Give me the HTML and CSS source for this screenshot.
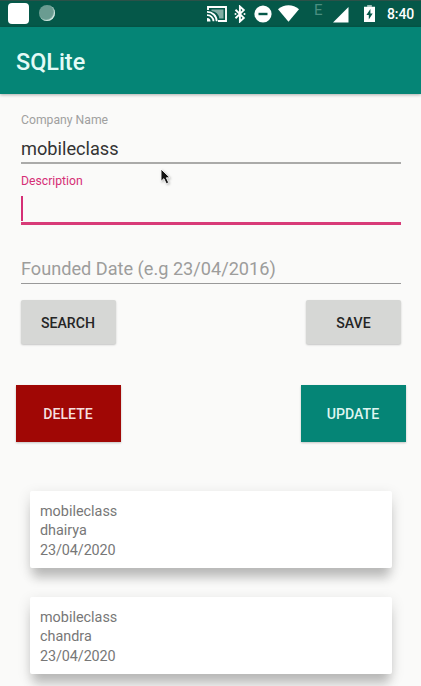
FILE: index.html
```html
<!DOCTYPE html>
<html lang="en">
<head>
<meta charset="utf-8">
<title>SQLite</title>
<link rel="stylesheet" href="styles.css">
</head>
<body>
<div class="screen">
  <div class="status">
    <span class="notice-square"></span>
    <span class="notice-dot"></span>
    <span class="spacer"></span>
    <svg class="cast" width="20" height="16" viewBox="0 0 20 16"><path d="M1 4V1h18v14h-8" fill="none" stroke="#fff" stroke-width="1.9"/><path d="M4.5 3.5h12v9h-4.2A9 9 0 0 0 4.5 5z" fill="#fff" opacity=".5"/><path d="M0 5.8A9.5 9.5 0 0 1 9.7 15.3M0 9.1A6.3 6.3 0 0 1 6.5 15.3" fill="none" stroke="#fff" stroke-width="1.8"/><path d="M0 12a3.4 3.4 0 0 1 3.5 3.5H0z" fill="#fff"/></svg>
    <svg class="bluetooth" width="12" height="18" viewBox="0 0 12 18"><path d="M1.5 4.8l8.3 8.1-3.9 3.6V1.5l3.9 3.6-8.3 8.1" fill="none" stroke="#fff" stroke-width="1.9"/><circle cx="1.5" cy="9" r="1" fill="#fff"/><circle cx="10.5" cy="9" r="1" fill="#fff"/></svg>
    <svg class="dnd" width="18" height="18" viewBox="0 0 18 18"><circle cx="9" cy="9" r="8.6" fill="#fff"/><path d="M4.5 9h9" stroke="#055849" stroke-width="2.4"/></svg>
    <svg class="wifi" width="21" height="17" viewBox="0 0 21 17"><path d="M0 4.3C6-1 15-1 21 4.3L10.5 16.7z" fill="#fff"/></svg>
    <span class="network">E</span>
    <svg class="signal" width="16" height="16" viewBox="0 0 16 16"><path d="M0 15.5L15.5 0v15.5z" fill="#fff"/></svg>
    <svg class="battery" width="11" height="17" viewBox="0 0 11 17"><path d="M3.3 0h4.4v1.8H11V17H0V1.8h3.3z" fill="#fff"/><path d="M3.3 0h4.4v1.8H3.3z" fill="#055849" opacity=".4"/><path d="M6.4 4L2.4 10h2.4v4.6L8.7 8.5H6.4z" fill="#055849"/></svg>
    <span class="time">8:40</span>
  </div>
  <header class="appbar"><h1>SQLite</h1></header>
  <main class="content">
    <div class="field company">
      <span class="label">Company Name</span>
      <span class="value">mobileclass</span>
    </div>
    <div class="field description">
      <span class="label">Description</span>
      <span class="caret"></span>
    </div>
    <div class="field founded"><span class="hint">Founded Date (e.g 23/04/2016)</span></div>
    <div class="actions">
      <button class="btn search">SEARCH</button>
      <button class="btn">SAVE</button>
    </div>
    <div class="actions wide">
      <button class="btn delete">DELETE</button>
      <button class="btn update">UPDATE</button>
    </div>
    <div class="list">
      <article class="card"><p class="name">mobileclass</p><p>dhairya</p><p class="date">23/04/2020</p></article>
      <article class="card"><p class="name">mobileclass</p><p>chandra</p><p class="date">23/04/2020</p></article>
    </div>
  </main>
  <svg class="pointer" width="14" height="18" viewBox="0 0 14 18"><path d="M1 1v12.3l2.9-2.6 2.4 5.1 2.4-1.1-2.3-4.9H10z" fill="#111" stroke="#fff" stroke-width=".9"/></svg>
</div>
</body>
</html>
```
FILE: styles.css
```css
* { box-sizing: border-box; }
body { margin: 0; font-family: Roboto, sans-serif; background: #fafaf9; }
p, h1 { margin: 0; }
.screen { position: relative; width: 421px; height: 686px; overflow: hidden; }

.status { display: flex; align-items: flex-start; height: 27px; padding: 0 5px 0 8px; background: #055849; border-top: 1px solid #2c5148; color: #fff; }
.status > * { flex: none; }
.status > .spacer { flex: 1; }
.notice-square { width: 21px; height: 21px; margin-top: 2px; border-radius: 4px; background: #fff; }
.notice-dot { width: 16px; height: 16px; margin: 4px 0 0 10px; border-radius: 50%; background: #6a9c91; box-shadow: inset -1px -1px 1px #d9eee8; }
.cast { margin: 5px 7px 0 0; }
.bluetooth { margin: 4px 8px 0 0; }
.dnd { margin: 4px 6px 0 0; }
.wifi { margin: 4px 15px 0 0; }
.network { width: 10px; margin: 0 9px 0 0; font-size: 15px; line-height: 18px; color: #4b8e80; }
.signal { margin: 6px 15px 0 0; }
.battery { margin: 4px 12px 0 0; }
.time { width: 29px; padding-top: 4px; font-size: 14px; line-height: 18px; font-weight: 500; letter-spacing: -.1px; white-space: nowrap; }

.appbar { position: relative; display: flex; align-items: center; height: 67px; padding: 3px 16px 0; background: #058576; box-shadow: 0 1px 3px rgba(0, 0, 0, .3); }
.appbar h1 { font-size: 23.4px; line-height: 28px; font-weight: 500; color: #e4fbf6; }

.content { padding: 0 15.5px; }
.field { display: flex; flex-direction: column; margin: 0 4.5px 0 5px; padding-left: .5px; white-space: nowrap; }
.label { font-size: 12.2px; line-height: 16px; color: #a0a09f; }
.company { height: 70px; padding-top: 18px; border-bottom: 2px solid #aaaaa9; }
.value { margin-top: 10px; font-size: 18.2px; line-height: 22px; color: #333; }
.description { height: 61px; padding-top: 9px; border-bottom: 3px solid #d83b78; }
.description .label { color: #d52f76; }
.caret { width: 2px; height: 25px; margin-top: 7px; background: #d52f76; }
.founded { height: 59px; padding-top: 33px; border-bottom: 1.5px solid #999; }
.hint { font-size: 18.15px; line-height: 22px; color: #9d9d9c; }

.actions { display: flex; justify-content: space-between; margin: 16px 4.5px 0 5px; }
.btn { width: 95px; height: 44px; padding: 1px 0 0; border: 0; border-radius: 2px; background: #d6d7d5; box-shadow: 0 1px 2px rgba(0, 0, 0, .22); font: 500 14.1px/20px Roboto, sans-serif; color: #252525; }
.wide { margin: 41px 0 0; }
.wide .btn { width: 105px; height: 57px; border-radius: 0; color: #dff5f0; }
.wide .delete { background: #a00705; color: #f6dfdf; }
.wide .update { background: #058576; }

.list { display: flex; flex-direction: column; gap: 29px; margin: 49px 14px 0 14.5px; }
.card { height: 77px; padding: 11px 10px 0; border-radius: 2px; background: #fff; box-shadow: 0 13px 10px -3px rgba(0, 0, 0, .19), 0 4px 14px rgba(0, 0, 0, .13); font-size: 14.4px; line-height: 19.4px; color: #777; }
.card:first-child { position: relative; z-index: 0; }
.date { letter-spacing: -.1px; }

.pointer { position: absolute; left: 160px; top: 168px; filter: drop-shadow(1px 1px 1px rgba(0, 0, 0, .25)); }
```
